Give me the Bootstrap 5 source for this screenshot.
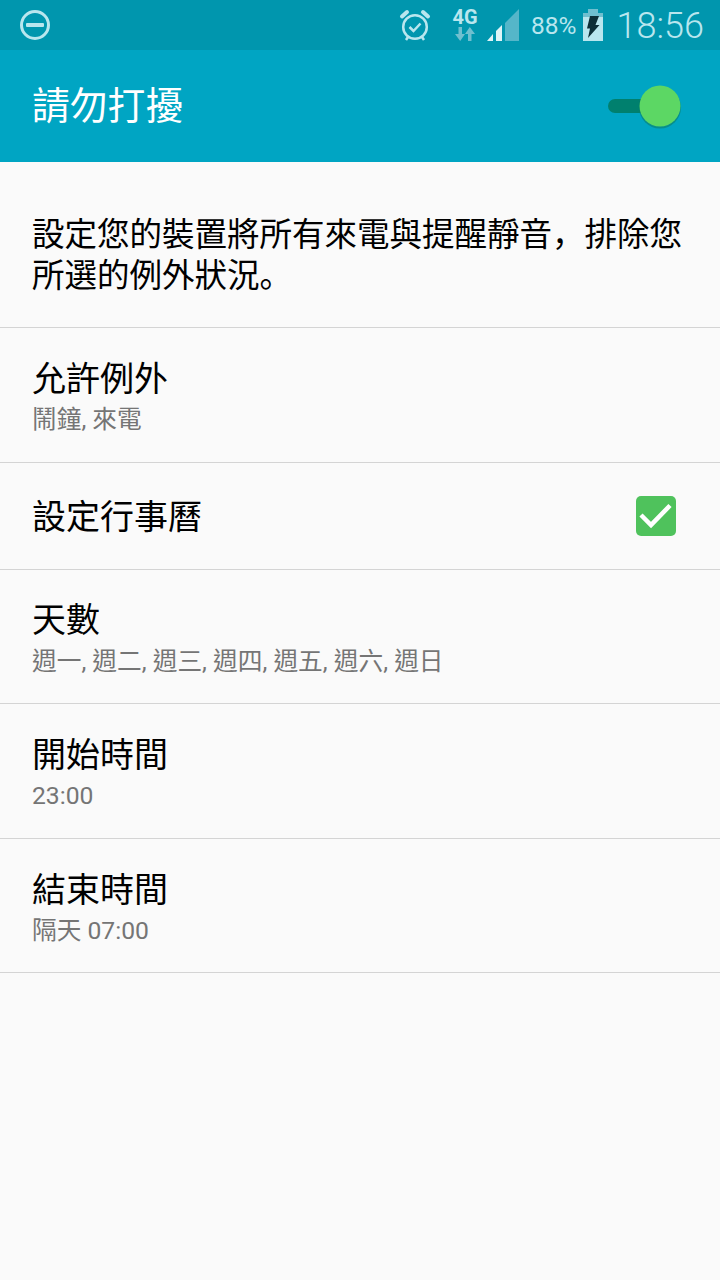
<!DOCTYPE html>
<html lang="zh-Hant">
<head>
    <meta charset="UTF-8">
    <meta name="viewport" content="width=device-width, initial-scale=1.0">
    <title>請勿打擾</title>
    <link rel="stylesheet" href="https://cdn.jsdelivr.net/npm/bootstrap@5.3.0/dist/css/bootstrap.min.css">
    <style>
        html, body { height: 1280px; overflow: hidden; }
        body { background: #fafafa; font-family: "Roboto", "Noto Sans CJK TC", sans-serif; color: #000; }
        .status-bar { height: 50px; background: #0096ae; color: #b9e6ee; padding: 0 16px 0 19px; }
        .status-pct { font-size: 24.5px; line-height: 1; margin: 2px 6px 0 12px; }
        .status-time { font-size: 36px; font-weight: 300; line-height: 1; margin: 2px 0 0 14px; }
        .net-wrap { width: 28px; margin-left: 19px; }
        .net-label { font-size: 20px; font-weight: 700; line-height: 1; margin-top: -3px; }
        .app-bar { height: 112px; background: #00a5c3; color: #fff; padding: 0 38px 0 32px; }
        .app-title { font-size: 37.8px; line-height: 1; margin: 2px 0 0; font-weight: 400; }
        .switch-box { width: 74px; height: 44px; margin-top: 1px; }
        .desc-row { height: 166px; padding: 53px 32px 0; font-family: "Roboto", "Noto Sans CJK JP", sans-serif; font-feature-settings: "locl" 0; font-size: 32.5px; line-height: 41px; border-bottom: 1px solid #d4d4d4; }
        .set-row { border-bottom: 1px solid #d4d4d4; padding: 0 44px 0 32px; }
        .row-two { height: 134.6px; padding-top: 4px; }
        .row-one { height: 107px; padding-top: 2px; }
        .set-title { font-size: 34px; line-height: 40px; }
        .set-sub { font-size: 24.7px; line-height: 30px; color: #757575; margin-top: 6.5px; margin-bottom: -.5px; }
        .check-box { margin-top: -2px; }
    </style>
</head>
<body>
    <div class="status-bar d-flex align-items-center">
        <svg width="32" height="32" viewBox="0 0 32 32"><circle cx="16" cy="16" r="13.5" fill="none" stroke="#b9e6ee" stroke-width="3"/><rect x="7" y="14" width="18" height="4" rx="1" fill="#b9e6ee"/></svg>
        <div class="ms-auto d-flex align-items-center">
            <svg width="34" height="34" viewBox="0 0 34 34" fill="none" stroke="#b9e6ee"><circle cx="17" cy="19" r="11.800" stroke-width="2.500"/><path d="M11.500 19l4 4 7-7.500" stroke-width="2.500"/><path d="M4 8.500L9 4M30 8.500L25 4" stroke-width="4" stroke-linecap="round"/><path d="M10 29l-2 3M24 29l2 3" stroke-width="2.500"/></svg>
            <div class="net-wrap d-flex flex-column align-items-center">
                <span class="net-label">4G</span>
                <svg width="20" height="14" viewBox="0 0 20 14"><path d="M3.500 0h3.500v7h3L5.200 14 0 7h3.500z" fill="#6fbfcf"/><path d="M13 14h3.500V7H20L14.800 0 10 7h3z" fill="#6fbfcf"/></svg>
            </div>
            <svg class="ms-2" width="32" height="32" viewBox="0 0 32 32"><path d="M6 25v7H0z" fill="#dff4f7"/><path d="M15 16v16H9v-10z" fill="#dff4f7"/><path d="M32 0v32H18V14z" fill="#55b6c9"/></svg>
            <span class="status-pct">88%</span>
            <svg width="20" height="32" viewBox="0 0 20 32"><rect x="5" y="0" width="10" height="4" fill="#6fbfcf"/><rect y="4" width="20" height="4" fill="#6fbfcf"/><rect y="8" width="20" height="24" fill="#b9e6ee"/><path d="M7 7h9l-3.500 9h4L5 29l2-9.500H4z" fill="#0d2f38"/></svg>
            <span class="status-time">18:56</span>
        </div>
    </div>

    <div class="app-bar d-flex align-items-center justify-content-between">
        <h1 class="app-title">請勿打擾</h1>
        <svg class="switch-box" viewBox="0 0 74 44"><rect x="0" y="14" width="50" height="14" rx="7" fill="#00806e"/><circle cx="52" cy="22.500" r="21" fill="#0a7f68" opacity=".6"/><circle cx="52" cy="21" r="20.500" fill="#5cd764"/></svg>
    </div>

    <div class="desc-row">設定您的裝置將所有來電與提醒靜音，排除您所選的例外狀況。</div>

    <div class="set-row row-two d-flex flex-column justify-content-center">
        <div class="set-title">允許例外</div>
        <div class="set-sub">鬧鐘, 來電</div>
    </div>
    <div class="set-row row-one d-flex align-items-center justify-content-between">
        <div class="set-title">設定行事曆</div>
        <svg class="check-box" width="40" height="40" viewBox="0 0 40 40"><rect width="40" height="40" rx="5" fill="#4fc25c"/><path d="M5 19l10 10L34 9.500" fill="none" stroke="#fff" stroke-width="4.500"/></svg>
    </div>
    <div class="set-row row-two d-flex flex-column justify-content-center">
        <div class="set-title">天數</div>
        <div class="set-sub">週一, 週二, 週三, 週四, 週五, 週六, 週日</div>
    </div>
    <div class="set-row row-two d-flex flex-column justify-content-center">
        <div class="set-title">開始時間</div>
        <div class="set-sub">23:00</div>
    </div>
    <div class="set-row row-two d-flex flex-column justify-content-center">
        <div class="set-title">結束時間</div>
        <div class="set-sub">隔天 07:00</div>
    </div>

    <script src="https://cdn.jsdelivr.net/npm/bootstrap@5.3.0/dist/js/bootstrap.bundle.min.js"></script>
</body>
</html>
